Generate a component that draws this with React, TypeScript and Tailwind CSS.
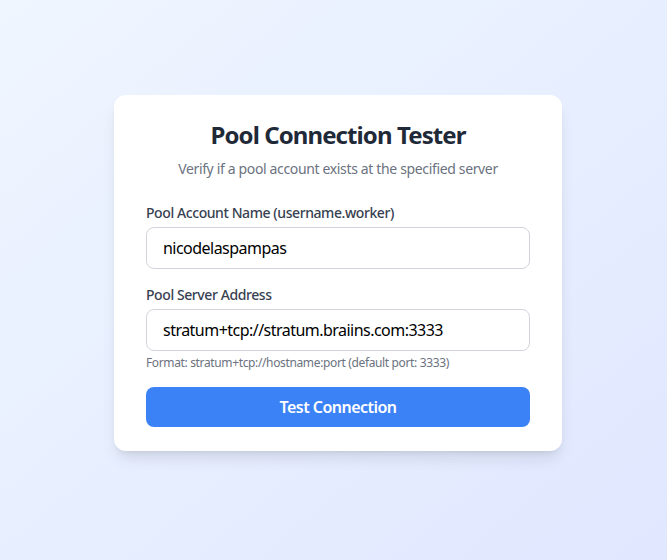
import React from "react";

export default function App() {
  return (
    <div
      className="min-h-screen w-full flex items-center justify-center bg-gradient-to-br from-[#eff6ff] to-[#e0e7ff] tracking-[-0.033em]"
      style={{ fontFamily: '"Noto Sans", "Open Sans", sans-serif' }}
    >
      <div className="w-[448px] bg-white rounded-xl shadow-lg px-8 py-6 -mt-[14px] ml-[9px]">
        <div className="text-center mb-6">
          <h1 className="text-2xl font-bold text-[#1f2937] tracking-[-0.038em]">Pool Connection Tester</h1>
          <p className="mt-2 text-sm text-[#6b7280] tracking-[-0.025em]">
            Verify if a pool account exists at the specified server
          </p>
        </div>
        <div className="mb-4">
          <label className="block text-sm font-medium text-[#374151] mb-1 tracking-[-0.03em]">
            Pool Account Name (username.worker)
          </label>
          <input
            className="w-full px-4 py-2 text-base text-black border border-[#d1d5db] rounded-lg outline-none tracking-[-0.033em]"
            defaultValue="nicodelaspampas"
          />
        </div>
        <div className="mb-4">
          <label className="block text-sm font-medium text-[#374151] mb-1 tracking-[-0.03em]">
            Pool Server Address
          </label>
          <input
            className="w-full px-4 py-2 text-base text-black border border-[#d1d5db] rounded-lg outline-none tracking-[-0.033em]"
            defaultValue="stratum+tcp://stratum.braiins.com:3333"
          />
          <p className="mt-1 text-xs text-[#6b7280] tracking-[-0.03em]">
            Format: stratum+tcp://hostname:port (default port: 3333)
          </p>
        </div>
        <button className="w-full py-2 bg-[#3b82f6] text-white font-semibold rounded-lg text-base tracking-[-0.033em]">
          Test Connection
        </button>
      </div>
    </div>
  );
}
